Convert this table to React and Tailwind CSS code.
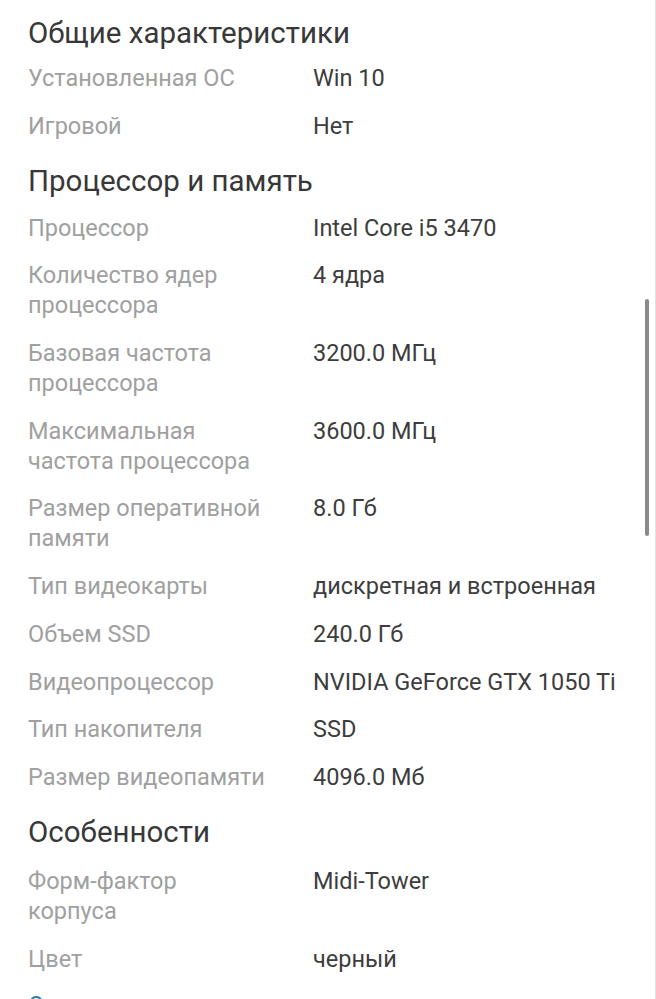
import React from "react";

const sections = [
  {
    title: "Общие характеристики",
    gap: "mt-[12px]",
    rows: [
      ["Установленная ОС", "Win 10"],
      ["Игровой", "Нет"],
    ],
  },
  {
    title: "Процессор и память",
    gap: "mt-[14px]",
    rows: [
      ["Процессор", "Intel Core i5 3470"],
      ["Количество ядер процессора", "4 ядра"],
      ["Базовая частота процессора", "3200.0 МГц"],
      ["Максимальная частота процессора", "3600.0 МГц"],
      ["Размер оперативной памяти", "8.0 Гб"],
      ["Тип видеокарты", "дискретная и встроенная"],
      ["Объем SSD", "240.0 Гб"],
      ["Видеопроцессор", "NVIDIA GeForce GTX 1050 Ti"],
      ["Тип накопителя", "SSD"],
      ["Размер видеопамяти", "4096.0 Мб"],
    ],
  },
  {
    title: "Особенности",
    gap: "mt-[16px]",
    rows: [
      ["Форм-фактор корпуса", "Midi-Tower"],
      ["Цвет", "черный"],
    ],
  },
];

const SpecRow = ({ label, value }) => (
  <div className="flex">
    <div className="w-[285px] shrink-0 pr-[47px] text-[#a0a0a0]">{label}</div>
    <div className="text-[#3d3d3d]">{value}</div>
  </div>
);

const App = () => {
  return (
    <div
      className="relative h-[999px] overflow-hidden bg-white border-r border-[#e2e2e2] pl-[28px] pt-[15px] text-[23.5px] leading-[30px]"
      style={{ fontFamily: "Roboto, 'Noto Sans', sans-serif" }}
    >
      {sections.map((s, i) => (
        <div key={s.title} className={i > 0 ? "mt-[22px]" : ""}>
          <h2 className="text-[29.5px] leading-[36px] text-[#383838]">{s.title}</h2>
          <div className={`${s.gap} flex flex-col gap-[17.7px]`}>
            {s.rows.map(([label, value]) => (
              <SpecRow key={label} label={label} value={value} />
            ))}
          </div>
        </div>
      ))}
      <div className="mt-[16px] text-[#2b7eab]">Описание</div>

      {/* scrollbar */}
      <div className="absolute right-[6px] top-[299px] h-[237px] w-[4px] rounded-full bg-[#8a8a8a]" />
    </div>
  );
};

export default App;
